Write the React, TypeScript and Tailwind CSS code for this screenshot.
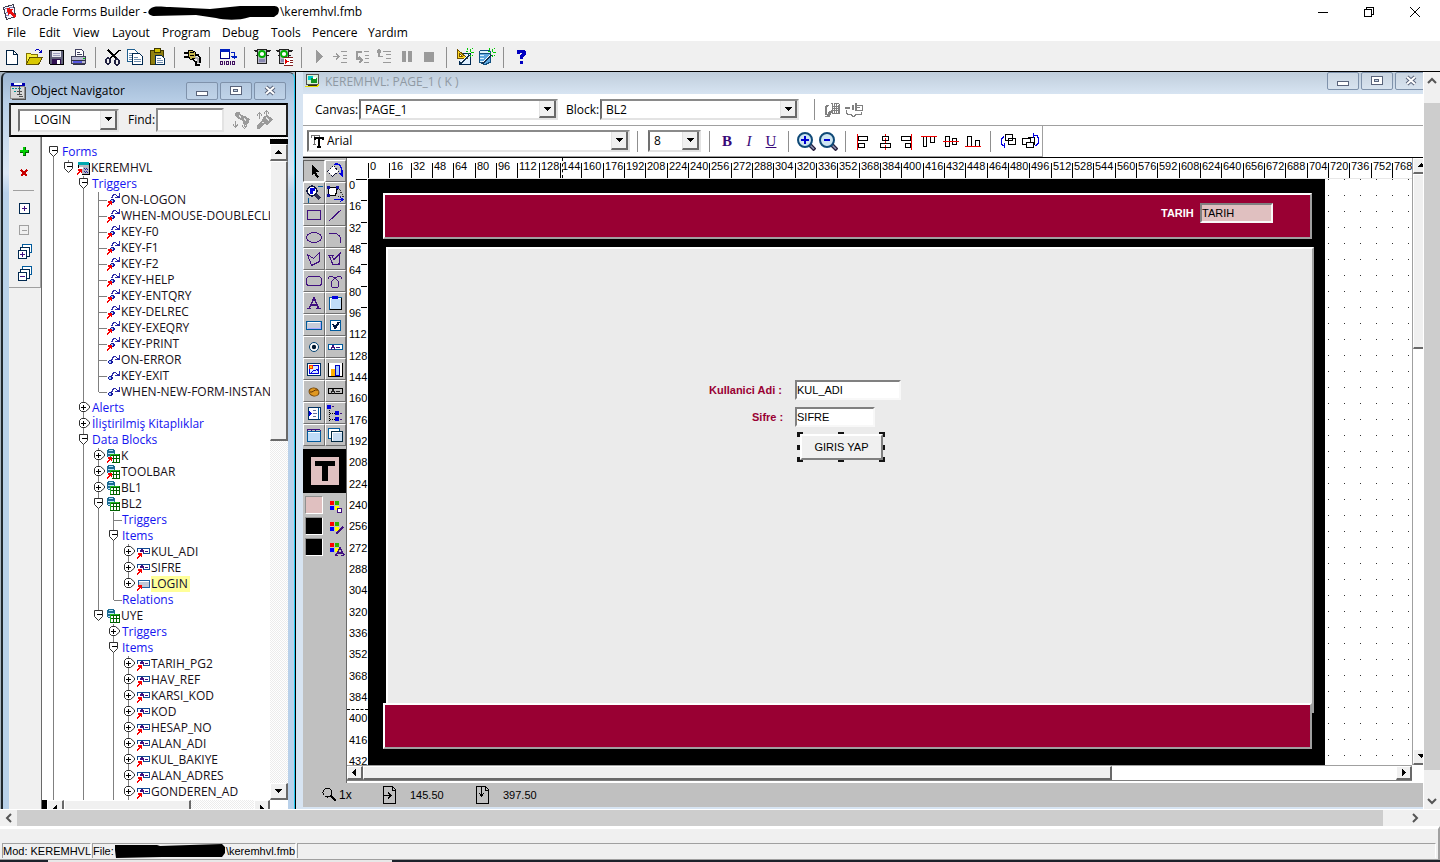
import type { ReactNode } from "react";

/* ---------- drawing helpers ---------- */

function Icon({ children, w = 20, h = 20 }: { children: ReactNode; w?: number; h?: number }) {
  return (
    <svg width={w} height={h} viewBox={`0 0 ${w} ${h}`} className="block shrink-0" fill="none" shapeRendering="crispEdges" aria-hidden="true">
      {children}
    </svg>
  );
}

function ToolButton({ label, children }: { label: string; children: ReactNode }) {
  return (
    <button type="button" aria-label={label} className="flex h-[22px] w-[22px] shrink-0 items-center justify-center">
      {children}
    </button>
  );
}

function Separator() {
  return (
    <div className="flex h-[21px] w-[13px] shrink-0 justify-center">
      <div className="w-px bg-[#8f8f8f]" />
    </div>
  );
}

type ComboProps = { label: string; value: string; box: string; field?: string; lead?: ReactNode };

function Combo({ label, value, box, field = "pl-1", lead }: ComboProps) {
  return (
    <div className={`relative flex shrink-0 items-center border-2 border-t-[#8a8a8a] border-r-[#e3e3e3] border-b-[#e3e3e3] border-l-[#707070] bg-white ${box}`}>
      {lead}
      <select aria-label={label} defaultValue={value} className={`h-full min-w-0 flex-1 appearance-none bg-transparent text-[12px] leading-4 outline-none ${field}`}>
        <option>{value}</option>
      </select>
      <span className="pointer-events-none flex h-full w-[17px] items-center justify-center border-r-2 border-b-2 border-l border-r-[#696969] border-b-[#696969] border-l-[#e3e3e3] bg-[#f0f0f0]">
        <Icon w={7} h={4}>
          <path d="M0 0h7v1h-1v1h-1v1h-1v1h-1v-1h-1v-1h-1v-1h-1z" fill="#000" />
        </Icon>
      </span>
    </div>
  );
}

/* ---------- main toolbar icons ---------- */

const grey = "#9a9a9a";

const traffic = (
  <>
    <path d="M5.500 2.500h9v14h-9z" fill="#b8b8c8" stroke="#222" />
    <path d="M1.500 3.500h4M14.500 3.500h4M2.500 4.500h3M14.500 4.500h3M3.500 8.500h2M14.500 8.500h2" stroke="#222" />
    <circle cx="10" cy="7" r="3" fill="#fff" stroke="#00b000" strokeWidth="1.800" shapeRendering="auto" />
    <path d="M7 12h6v3h-6z" fill="#8888b0" />
  </>
);

const wand = (
  <>
    <path d="M6 17l9-9" stroke="#103050" strokeWidth="2" />
    <path d="M7 15l7-7" stroke="#fff" />
    <path d="M13.500 1v2M16.500 2v3M12 4.500h2M17 5.500h3M16.500 8v2M18.500 1v1M14.500 6v1M18.500 8v1" stroke="#00c800" />
  </>
);

const mainTools: (null | [string, ReactNode])[] = [
  ["New", <Icon><path d="M4.500 3.500h7l4 4v10h-11z" fill="#fff" stroke="#002040" /><path d="M11.500 3.500v4h4" stroke="#002040" /></Icon>],
  ["Open", <Icon><path d="M2.500 17.500v-11h4l1 1h6v3" fill="#f8f040" stroke="#807000" /><path d="M2.500 17.500l3-7h13l-4 7z" fill="#d8c800" stroke="#605000" /><path d="M11 3.500c2-2 5-1 6 2M14.500 5.500h3v-3" stroke="#0000c0" /></Icon>],
  ["Save", <Icon><path d="M3.500 3.500h14v14h-13l-1-1z" fill="#606078" stroke="#000" /><path d="M6 4h9v6h-9z" fill="#e8e8f0" /><path d="M7 6h7M7 8h7" stroke="#a0a0c0" /><path d="M6 12h9v5h-9z" fill="#301050" /><path d="M11 13h3v4h-3z" fill="#fff" /></Icon>],
  ["Print", <Icon><path d="M7.500 9.500v-7h6l2 2v5" fill="#fff" stroke="#404060" /><path d="M9 5h3M9 7h5" stroke="#404060" /><path d="M3.500 9.500h14v7h-14z" fill="#b8b8d0" stroke="#404058" /><path d="M3 13h15M5 17.500h12" stroke="#303048" /><path d="M5 14h9v2h-9z" fill="#5858e0" /><path d="M15 11h2v1h-2z" fill="#00c000" /></Icon>],
  null,
  ["Cut", <Icon><path d="M5 3l9 9M18 3.500h-2l-10 9" stroke="#000" strokeWidth="1.500" /><ellipse cx="5" cy="14" rx="2" ry="3" stroke="#202040" strokeWidth="1.500" /><ellipse cx="14" cy="15" rx="2" ry="3" stroke="#202040" strokeWidth="1.500" /></Icon>],
  ["Copy", <Icon><path d="M2.500 2.500h7l3 3v9h-10z" fill="#fff" stroke="#206090" /><path d="M4 6h5M4 8h5M4 10h5M4 12h5" stroke="#7090b0" /><path d="M7.500 6.500h7l3 3v8h-10z" fill="#fff" stroke="#002850" /><path d="M9 10h4M9 12h7M9 14h7" stroke="#7090b0" /></Icon>],
  ["Paste", <Icon><path d="M3.500 3.500h13v14h-13z" fill="#908010" stroke="#403800" /><path d="M7 1.500h6v4h-6z" fill="#d0c000" stroke="#403800" /><path d="M8.500 8.500h6l3 3v6h-9z" fill="#fff" stroke="#002850" /><path d="M10 11h4M10 13h6M10 15h6" stroke="#7090b0" /></Icon>],
  null,
  ["Connect", <Icon><path d="M2 6h5M2 10h5" stroke="#000" strokeWidth="2" /><path d="M6.500 3.500h4l3 2v6l-4 1h-1l-2-3z" fill="#c8b850" stroke="#000" /><path d="M8 5.500h4M8 8.500h4" stroke="#000" /><path d="M13 8h3l2 3v5M10 12l4 3v3h4" stroke="#000" strokeWidth="1.500" /><path d="M13 10l3 2v4" stroke="#b0b0b0" strokeWidth="2" /></Icon>],
  null,
  ["Compile module", <Icon><path d="M3.500 2.500h9v9h-9z" fill="#fff" stroke="#000080" /><path d="M3 3.500h10" stroke="#0020c0" strokeWidth="3" /><path d="M14 5.500h3.500v5M15 9.500h5l-2.500 2z" stroke="#0020c0" /><path d="M3.500 14.500h2v3h-2zM9.500 14.500h2v3h-2zM7.500 14v4M13.500 14v4M15.500 14.500h2v3h-2z" stroke="#401060" /></Icon>],
  null,
  ["Run form", <Icon>{traffic}</Icon>],
  ["Run form debug", <Icon>{traffic}<path d="M10 10h9v9h-9z" fill="#fff" /><path d="M11 12l4 2.500-4 2.500z" fill="#e00000" /><path d="M10 10.500h9M16 13.500h3M16 15.500h3M10 18.500h9" stroke="#802020" /></Icon>],
  null,
  ["Go", <Icon><path d="M7 3v13l7-6.500z" fill={grey} /></Icon>],
  ["Step into", <Icon><path d="M2 9.500h6M5 6.500l3 3-3 3M10 4.500h6M12 8.500h4M12 11.500h4M10 15.500h6" stroke={grey} strokeWidth="1.500" /></Icon>],
  ["Step over", <Icon><path d="M9 5h-5v7h4M6 10l3 3-3 3M11 4.500h5M12 8.500h4M12 11.500h4M11 15.500h5" stroke={grey} strokeWidth="1.500" /></Icon>],
  ["Step out", <Icon><path d="M8 9.500h-4v-6M2 5.500l2-3 2 3M8 4.500h8M11 7.500h5M11 11.500h5M8 15.500h8" stroke={grey} strokeWidth="1.500" /></Icon>],
  ["Pause", <Icon><path d="M5 4h4v11h-4zM11 4h4v11h-4z" fill={grey} /></Icon>],
  ["Stop", <Icon><path d="M5 5h10v10h-10z" fill={grey} /></Icon>],
  null,
  ["Layout wizard", <Icon><path d="M8.500 6.500h8v11h-11v-4" fill="#e0f0ff" stroke="#002850" /><path d="M3.500 2.500v9h10z" fill="#ffd820" stroke="#705000" /><path d="M5.500 6.500v3h3z" fill="#fff" stroke="#705000" />{wand}</Icon>],
  ["Data block wizard", <Icon><path d="M3.500 5v10l4 2h3l4-2v-10z" fill="#60a8e0" stroke="#105080" /><ellipse cx="9" cy="5" rx="5.500" ry="2" fill="#e0f4ff" stroke="#105080" /><path d="M4 8.500h4M4 11.500h4M4 14.500h3" stroke="#e0f4ff" />{wand}</Icon>],
  null,
  ["Help", <Icon><path d="M7 7v-2l1-1h4l1 1v2l-3 3v2M10 14v3" stroke="#0000c0" strokeWidth="3" /></Icon>],
];

/* ---------- layout toolbar icons ---------- */

const K = "#000";
const R = "#f00000";

const magnifier = (
  <>
    <path d="M14 14l5 5" stroke="#28203c" strokeWidth="4" shapeRendering="auto" />
    <path d="M14 14l4 4" stroke="#9098b8" strokeWidth="1.500" shapeRendering="auto" />
    <circle cx="9" cy="9" r="7" fill="#cfe6f2" stroke="#104a78" strokeWidth="2" shapeRendering="auto" />
  </>
);

const alignTools: [string, ReactNode][] = [
  ["Align left", <Icon><path d="M5.500 5.500h9v4h-9zM5.500 12.500h6v4h-6z" stroke={K} /><path d="M4.500 3v16" stroke={R} /></Icon>],
  ["Align center", <Icon><path d="M7.500 5.500h6v4h-6zM5.500 12.500h10v4h-10z" stroke={K} /><path d="M10.500 3v2M10.500 7v2M10.500 10v2M10.500 14v2M10.500 17v2" stroke={R} /></Icon>],
  ["Align right", <Icon><path d="M4.500 5.500h9v4h-9zM8.500 12.500h5v4h-5z" stroke={K} /><path d="M14.500 3v16" stroke={R} /></Icon>],
  ["Align top", <Icon><path d="M4.500 5.500h3v10h-3zM11.500 5.500h4v6h-4z" stroke={K} /><path d="M2 5.500h16" stroke={R} /></Icon>],
  ["Align middle", <Icon><path d="M4.500 5.500h4v10h-4zM11.500 7.500h4v6h-4z" stroke={K} /><path d="M2 10.500h16" stroke={R} /></Icon>],
  ["Align bottom", <Icon><path d="M4.500 5.500h4v10h-4zM12.500 9.500h4v6h-4z" stroke={K} /><path d="M2 15.500h16" stroke={R} /></Icon>],
];

/* ---------- palette icons ---------- */

const P = "#401080";
const B = "#005a9c";

const palette: [string, ReactNode][] = [
  ["Select", <Icon><path d="M8 4v10l2-2 3 5 2-1-3-5h3z" fill="#000" /></Icon>],
  ["Rotate", <Icon><path d="M2.500 10.500l6-6 5 6-6 5z" fill="#fff" stroke="#101030" strokeDasharray="2 1" /><path d="M9 3.500c5-2 8 2 8 9" stroke="#0000e0" strokeWidth="1.500" /><path d="M13 12h5v5z" fill="#0000e0" /></Icon>],
  ["Magnify", <Icon><circle cx="8" cy="8" r="5" fill="#fff" stroke="#101840" strokeWidth="1.500" /><path d="M6 5h5v3h-2v3h-3z" fill="#0000e0" /><path d="M12 12l4 4" stroke="#303050" strokeWidth="3" /><path d="M14 3.500h5M4.500 15v5" stroke={B} /></Icon>],
  ["Reshape", <Icon><path d="M3.500 4.500h9l-2 8h-7z" fill="#fff" stroke="#000" /><path d="M13 4l5 9h-6" stroke="#333" strokeDasharray="1 1" /><path d="M2 3h3v3h-3zM11 3h3v3h-3zM2 11h3v3h-3z" fill="#1010a0" /><path d="M9 16.500h9M15 14l3 2.500-3 2.500" stroke="#0000e0" /></Icon>],
  ["Rectangle", <Icon><path d="M3.500 5.500h13v9h-13z" stroke={P} /></Icon>],
  ["Line", <Icon><path d="M4 16l12-11" stroke={P} strokeWidth="1.200" /></Icon>],
  ["Ellipse", <Icon><ellipse cx="10" cy="10.500" rx="7.500" ry="5" stroke={P} /></Icon>],
  ["Arc", <Icon><path d="M4 6.500h5c5 0 7 3 7 9" stroke={P} /></Icon>],
  ["Polygon", <Icon><path d="M3.500 5.500l6 4 6-6v9l-8 4z" stroke={P} /></Icon>],
  ["Polyline", <Icon><path d="M9 6.500h-5l4 9h6l1-11-6 6-2-3" stroke={P} strokeWidth="1.200" /></Icon>],
  ["Rounded rectangle", <Icon><rect x="2.500" y="5.500" width="15" height="9" rx="3" stroke={P} /></Icon>],
  ["Freehand", <Icon><path d="M3 8c0-3 3-3 5-2s6 4 6 7-2 4-4 4-4-1-4-4 4-6 6-7 5-1 5 2" stroke={P} /></Icon>],
  ["Text", <Icon><path d="M5 16l5-11 5 11M7 12h6M3 15.500h4M12 15.500h5" stroke={P} strokeWidth="1.500" /></Icon>],
  ["Frame", <Icon><path d="M4.500 4.500h12v12h-12z" fill="#c0dcf8" stroke={B} /><path d="M5.500 15v-9.500h11" stroke="#fff" /><path d="M16.500 5v11.500h-12" stroke="#000" /><path d="M7 3h6v3h-6z" fill="#0000e0" /></Icon>],
  ["Button", <Icon><rect x="2.500" y="6.500" width="15" height="8" rx="1" fill="#c8ccd8" stroke={B} /><path d="M4 7.500h12" stroke="#fff" /><path d="M4 13.500h12.500v-6" stroke="#a8a8ff" /></Icon>],
  ["Check box", <Icon><path d="M5.500 5.500h10v10h-10z" fill="#fff" stroke={B} strokeWidth="1" /><path d="M8 9l2 4 4-6" stroke="#001840" strokeWidth="2" /></Icon>],
  ["Radio button", <Icon><circle cx="10" cy="10" r="4.500" fill="#fff" stroke="#004070" shapeRendering="auto" /><circle cx="10" cy="10" r="2.200" fill="#001830" shapeRendering="auto" /></Icon>],
  ["Text item", <Icon><path d="M3.500 7.500h14v5h-14z" fill="#fff" stroke={B} /><path d="M6 13l2-5 2 5M11 10.500h4" stroke={P} /></Icon>],
  ["Image item", <Icon><path d="M3.500 4.500h13v12h-13z" fill="#fff" stroke="#003060" /><path d="M5.500 6.500h9v8h-9z" fill="#d8e8ff" stroke="#0000e0" /><path d="M7 14l3-3 1 1 2-2 2 3" stroke="#0000e0" /><circle cx="7" cy="8" r="2" fill="#ffd000" stroke="#ff3000" /></Icon>],
  ["Chart item", <Icon><path d="M3.500 4v13h14v-13" fill="#fff" stroke="#000" /><path d="M6 10h4v7h-4z" fill="#ffb000" /><path d="M10.500 6.500h4v10h-4z" fill="#a0c8ff" stroke="#0000c0" /></Icon>],
  ["Bean area", <Icon><ellipse cx="10" cy="11" rx="5" ry="4" fill="#e09820" stroke="#704000" shapeRendering="auto" transform="rotate(15 10 11)" /><path d="M6 11c3 1 4-3 8-2" stroke="#603000" shapeRendering="auto" /></Icon>],
  ["Display item", <Icon><path d="M3.500 7.500h14v5h-14z" stroke="#000" /><path d="M6 13l2-5 2 5M11 10.500h4" stroke="#222" /></Icon>],
  ["List item", <Icon><path d="M4.500 4.500h12v12h-12z" fill="#fff" stroke="#003060" /><path d="M14.500 5v11" stroke={B} /><path d="M9 7.500h3M9 10.500h4M9 13.500h3" stroke="#6070a0" /><path d="M5 8l3 2.500-3 2.500z" fill="#0000e0" /></Icon>],
  ["Tree item", <Icon><path d="M2 2h4v4h-4zM10 8h4v4h-4zM10 14h4v4h-4z" fill="#0000e0" /><path d="M4.500 7v11M5 10.500h5M5 16.500h5" stroke="#000" strokeDasharray="1 1" /><path d="M7 3.500h2M15 10.500h2M15 16.500h2" stroke={P} /></Icon>],
  ["Tab canvas", <Icon><path d="M3.500 6.500h13v10h-13z" fill="#c0dcf8" stroke={B} /><path d="M3.500 6v-2h3l1 2v-2h3l1 2v-2h4l1 2" stroke={P} /><path d="M4 7.500h12" stroke="#fff" /></Icon>],
  ["Stacked canvas", <Icon><path d="M3.500 3.500h11v10h-11z" fill="#fff" stroke={B} /><path d="M6.500 6.500h11v10h-11z" fill="#c8dcf0" stroke="#002840" /><path d="M7.500 16v-8.500h9.500" stroke="#fff" /></Icon>],
];

function Squares({ children }: { children: ReactNode }) {
  return (
    <Icon w={18} h={16}>
      <path d="M2 1h4v4h-4z" fill="#ff0000" />
      <path d="M7 1h4v4h-4z" fill="#30b000" />
      <path d="M2 6h4v4h-4z" fill="#0000ff" />
      <path d="M7 6h4v4h-4z" fill="#ffff00" />
      {children}
    </Icon>
  );
}

/* ---------- object tree ---------- */

type Node = "open" | "closed" | "tee" | "elbow";
type Glyph = "form" | "trigger" | "smart" | "block" | "blockUser" | "item" | "button";
type Row = { text: string; col: number; node: Node; guides?: number[]; glyph?: Glyph; up?: boolean; down?: boolean; selected?: boolean };

const smart = (text: string): Row => ({ text, col: 3, node: "tee", guides: [0, 2], glyph: "smart", up: true, down: true });
const item = (text: string, guides: number[], last = false): Row => ({ text, col: 5, node: "closed", guides, glyph: "item", up: true, down: !last });

const rows: Row[] = [
  { text: "Forms", col: 0, node: "open", down: true },
  { text: "KEREMHVL", col: 1, node: "open", guides: [0], glyph: "form", up: true },
  { text: "Triggers", col: 2, node: "open", guides: [0], up: true, down: true },
  ...["ON-LOGON", "WHEN-MOUSE-DOUBLECLICK", "KEY-F0", "KEY-F1", "KEY-F2", "KEY-HELP", "KEY-ENTQRY", "KEY-DELREC", "KEY-EXEQRY", "KEY-PRINT"].map(smart),
  { text: "ON-ERROR", col: 3, node: "tee", guides: [0, 2], glyph: "trigger" },
  { text: "KEY-EXIT", col: 3, node: "tee", guides: [0, 2], glyph: "trigger" },
  { text: "WHEN-NEW-FORM-INSTANCE", col: 3, node: "elbow", guides: [0, 2], glyph: "trigger" },
  { text: "Alerts", col: 2, node: "closed", guides: [0], up: true, down: true },
  { text: "İliştirilmiş Kitaplıklar", col: 2, node: "closed", guides: [0], up: true, down: true },
  { text: "Data Blocks", col: 2, node: "open", guides: [0], up: true, down: true },
  { text: "K", col: 3, node: "closed", guides: [0, 2], glyph: "blockUser", up: true, down: true },
  { text: "TOOLBAR", col: 3, node: "closed", guides: [0, 2], glyph: "blockUser", up: true, down: true },
  { text: "BL1", col: 3, node: "closed", guides: [0, 2], glyph: "block", up: true, down: true },
  { text: "BL2", col: 3, node: "open", guides: [0, 2], glyph: "block", up: true, down: true },
  { text: "Triggers", col: 4, node: "tee", guides: [0, 2, 3] },
  { text: "Items", col: 4, node: "open", guides: [0, 2, 3], up: true, down: true },
  item("KUL_ADI", [0, 2, 3, 4]),
  item("SIFRE", [0, 2, 3, 4]),
  { text: "LOGIN", col: 5, node: "closed", guides: [0, 2, 3, 4], glyph: "button", up: true, selected: true },
  { text: "Relations", col: 4, node: "elbow", guides: [0, 2, 3] },
  { text: "UYE", col: 3, node: "open", guides: [0, 2], glyph: "block", up: true },
  { text: "Triggers", col: 4, node: "closed", guides: [0, 2], up: true, down: true },
  { text: "Items", col: 4, node: "open", guides: [0, 2], up: true, down: true },
  ...["TARIH_PG2", "HAV_REF", "KARSI_KOD", "KOD", "HESAP_NO", "ALAN_ADI", "KUL_BAKIYE", "ALAN_ADRES", "GONDEREN_AD"].map((t) => item(t, [0, 2, 4])),
];

const redArrow = <path d="M1 9h4v4h-1v-1h-1v1h-1v1h-1v1h-1v-2h1v-1h1v-1h-1z" fill="#f80000" />;

function RowGlyph({ kind }: { kind: Glyph }) {
  const ball = kind === "smart" ? "M4 7h3v1h1v2h-1v1h-3v-1h-1v-2h1z" : "M2 8h3v1h1v2h-1v1h-3v-1h-1v-2h1z";
  const shine = kind === "smart" ? "M4 8h2v2h-2z" : "M2 9h2v2h-2z";
  return (
    <Icon w={14} h={16}>
      {kind === "form" && (
        <>
          <path d="M1.500 3.500h11v11h-11z" fill="#b8b8c0" stroke="#000" />
          <path d="M1 3.500h11" stroke="#00a8b0" strokeWidth="3" />
          <path d="M2 7h4v2h-4z" fill="#fff" />
          <path d="M7 8.500h1M9 8.500h1M8 9.500h1M10 9.500h1M7 11.500h1M9 11.500h1M8 12.500h1M10 12.500h1" stroke="#2020a0" />
          <path d="M0 8h5v7h-5z" fill="#fff" />
          {redArrow}
        </>
      )}
      {(kind === "smart" || kind === "trigger") && (
        <>
          <g transform={kind === "trigger" ? "translate(0 2)" : undefined}>
            <path d="M4 5.500h1v-2h1v-1h3v1h1v1h1M12.500 1v5M8 5.500h5M11.500 4v2" stroke="#1818a0" strokeWidth="0.900" />
          </g>
          <path d={ball} fill="#1818a0" />
          <path d={shine} fill="#a0d0ff" />
          {kind === "smart" && redArrow}
        </>
      )}
      {(kind === "block" || kind === "blockUser") && (
        <>
          <path d="M1 1h6v1h1v8h-7v-1h-1v-7h1z" fill="#1c6c94" />
          <path d="M2 2.500h4M1 5.500h6M1 8.500h3" stroke="#b8e4fa" />
          <path d="M3 6h10v9h-10z" fill="#006000" />
          <path d="M4 8h2v2h-2zM7 8h2v2h-2zM10 8h2v2h-2zM4 11h2v3h-2zM7 11h2v3h-2zM10 11h2v3h-2z" fill="#fff" />
          <path d="M3 6.500h9M3.500 6v8" stroke="#20b820" />
          {kind === "blockUser" && (
            <>
              <path d="M0 9h5v6h-5z" fill="#fff" />
              {redArrow}
            </>
          )}
        </>
      )}
      {kind === "item" && (
        <>
          <path d="M0.500 8v-3.500h12v5h-7" fill="#fff" stroke="#104890" />
          <path d="M3 8v-2h1v-1h1v1h1v3M3 7.500h3M8 7.500h3" stroke={P} />
          {redArrow}
        </>
      )}
      {kind === "button" && (
        <>
          <path d="M1.500 4.500h11v7h-11z" fill="#c0c8d8" stroke="#2060a0" />
          <path d="M2 5.500h10" stroke="#fff" />
          <path d="M0 9h5v6h-5z" fill="#fff" />
          {redArrow}
        </>
      )}
    </Icon>
  );
}

function TreeRow({ row }: { row: Row }) {
  const x = row.col * 15 + 7.5;
  const leaf = row.node === "tee" || row.node === "elbow";
  const line = "#808080";
  return (
    <li className="flex h-4 items-center whitespace-nowrap">
      <Icon w={row.col * 15 + 16} h={16}>
        {row.guides?.map((g) => <path key={g} d={`M${g * 15 + 7.5} 0v16`} stroke={line} />)}
        {(row.up || leaf) && <path d={`M${x} 0v8`} stroke={line} />}
        {(row.down || row.node === "tee") && <path d={`M${x} 8v8`} stroke={line} />}
        {leaf && <path d={`M${x} 8.500h8`} stroke={line} />}
        {row.node === "open" && (
          <>
            <path d={`M${x - 4} 2.500h8v6l-4 4l-4 -4z`} fill="#fff" stroke="#303030" shapeRendering="auto" />
            <path d={`M${x - 2} 6.500h5`} stroke="#000" />
          </>
        )}
        {row.node === "closed" && (
          <>
            <path d={`M${x - 2} 2.500h4l4 3.500v2l-4 3.500h-4l-2 -2v-5z`} fill="#fff" stroke="#303030" shapeRendering="auto" />
            <path d={`M${x - 2.5} 7.500h5M${x} 5v5`} stroke="#000" />
          </>
        )}
      </Icon>
      {row.glyph && <RowGlyph kind={row.glyph} />}
      <span className={row.selected ? "bg-[#ffff99] pr-[2px] text-[#101030]" : row.glyph ? "text-[#181018]" : "text-[#1414f0]"}>{row.text}</span>
    </li>
  );
}

/* ---------- window chrome ---------- */

function CaptionButtons() {
  const btn = "flex h-[18px] w-8 shrink-0 items-center justify-center rounded-[2px] border border-[#7f92ab] bg-white/15";
  return (
    <div className="flex gap-[2px]">
      <button type="button" aria-label="Minimize" className={btn}>
        <Icon w={12} h={12}><rect x="0.500" y="6.500" width="11" height="4" rx="1" fill="#fff" stroke="#59637a" /></Icon>
      </button>
      <button type="button" aria-label="Maximize" className={btn}>
        <Icon w={12} h={12}><rect x="0.500" y="1.500" width="11" height="8" rx="1" fill="#fff" stroke="#59637a" /><rect x="3.500" y="4.500" width="4" height="2" fill="#c8d6e6" stroke="#59637a" /></Icon>
      </button>
      <button type="button" aria-label="Close" className={btn}>
        <Icon w={12} h={12}><path d="M2 2l8 7M10 2l-8 7" stroke="#59637a" strokeWidth="4" shapeRendering="auto" /><path d="M2 2l8 7M10 2l-8 7" stroke="#fff" strokeWidth="2" shapeRendering="auto" /></Icon>
      </button>
    </div>
  );
}

const raised = "border-t border-l border-r-2 border-b-2 border-t-white border-l-white border-r-[#696969] border-b-[#696969] bg-[#f0f0f0]";

function Arrow({ dir, box }: { dir: "up" | "down" | "left" | "right"; box: string }) {
  const d = {
    up: "M4 2h1v1h1v1h1v1h1v1h-7v-1h1v-1h1v-1h1z",
    down: "M1 2h7v1h-1v1h-1v1h-1v1h-1v-1h-1v-1h-1v-1h-1z",
    left: "M6 1v7h-1v-1h-1v-1h-1v-1h-1v-1h1v-1h1v-1h1v-1z",
    right: "M3 1h1v1h1v1h1v1h1v1h-1v1h-1v1h-1v1h-1z",
  }[dir];
  return (
    <button type="button" aria-label={`Scroll ${dir}`} className={`flex shrink-0 items-center justify-center ${raised} ${box}`}>
      <Icon w={9} h={9}><path d={d} fill="#000" /></Icon>
    </button>
  );
}

function Chevron({ d, label, box }: { d: string; label: string; box: string }) {
  return (
    <button type="button" aria-label={label} className={`flex shrink-0 items-center justify-center ${box}`}>
      <svg width="10" height="10" viewBox="0 0 10 10" fill="none" aria-hidden="true"><path d={d} stroke="#555" strokeWidth="2" /></svg>
    </button>
  );
}

const hatch = "bg-[repeating-conic-gradient(#ececec_0_25%,#ffffff_0_50%)] bg-[length:2px_2px]";

/* ---------- object navigator ---------- */

function Navigator() {
  const navBtn = "flex h-[22px] w-full items-center justify-center";
  return (
    <section className="flex w-[296px] shrink-0 border-r border-black bg-[#a8b4c0] pl-px">
      <div className="flex min-w-0 flex-1 flex-col rounded-t-[6px] border-t border-r border-l-2 border-t-[#303840] border-r-[#20c8f0] border-l-[#20282f] bg-[linear-gradient(#9db6d3_0px,#b9cfe7_30px,#dce8f5_100px,#b9d1ea_120px)] px-[6px]">
        <header className="flex h-[30px] shrink-0 items-center gap-1 pt-[6px] pr-[2px]">
          <Icon w={18} h={18}>
            <path d="M2 1h14v3h-14z" fill="#0000b0" /><path d="M5 1h8v2h-8z" fill="#fff" />
            <path d="M1.500 4.500h14v12h-14z" fill="#d8d8d8" stroke="#909090" />
            <path d="M3 6.500h2M6 6.500h2M9 6.500h3M5 9.500h2" stroke="#009090" /><path d="M8 9.500h5M8 12.500h5M10 14.500h4M16.500 5v12h-14M10.500 4v9" stroke="#505050" />
          </Icon>
          <h2 className="flex-1 text-[12px] whitespace-nowrap">Object Navigator</h2>
          <CaptionButtons />
        </header>
        <div className="flex h-[34px] shrink-0 items-center border-2 border-t-black border-r-[#202020] border-b-black border-l-[#303030] bg-[#f0f0f0] pl-[7px]">
          <Combo label="Object" value="LOGIN" box="h-[23px] w-[101px]" field="pl-[14px]" />
          <label htmlFor="find" className="ml-[9px] w-7 whitespace-nowrap">Find:</label>
          <input id="find" className="h-[24px] w-[68px] border-2 border-t-[#8a8a8a] border-r-[#e3e3e3] border-b-[#e3e3e3] border-l-[#8a8a8a] bg-white px-1 outline-none" />
          <div className="ml-[6px] flex gap-px">
            <ToolButton label="Find next"><Icon><path d="M5 2h4l1 3 4 1 5 3-1 3-3 3h-2l-2-5-4-1-3-4zM4 4l5 5" fill={grey} /><path d="M8 5l2 3M13 8l2 3" stroke="#e8e8e8" /><path d="M4.500 11v6M2 14.500l2.500 3 2.500-3M13.500 12v5M11 15.500l2.500 3 2.500-3" stroke={grey} /></Icon></ToolButton>
            <ToolButton label="Find previous"><Icon><path d="M3 16l5-6 2-4 3-1 6 4-2 2-3 4-4-1-5 5h-2z" fill={grey} /><path d="M12 7l3 4M8 12l2 1" stroke="#e8e8e8" /><path d="M5.500 3v6M3 5.500l2.500-3 2.500 3M12.500 1v4M10 3.500l2.500-3 2.500 3" stroke={grey} /></Icon></ToolButton>
          </div>
        </div>
        <div className="flex min-h-0 flex-1 bg-[#f0f0f0]">
          <div className="w-8 shrink-0">
            <div className="flex flex-col items-center border-r border-b border-[#a0a0a0] pt-[3px] pr-[2px] pb-[2px]">
              <button type="button" aria-label="Create" className={navBtn}><Icon><path d="M9 6h3v3h3v3h-3v3h-3v-3h-3v-3h3z" fill="#006000" /><path d="M9 6h2v3h3v2h-3v3h-2v-3h-3v-2h3z" fill="#00d000" /></Icon></button>
              <button type="button" aria-label="Delete" className={navBtn}><Icon><path d="M7 7l6 6M13 7l-6 6" stroke="#c80000" strokeWidth="2.500" /></Icon></button>
              <div className="my-[6px] h-px w-[21px] bg-[#a0a0a0]" />
              <button type="button" aria-label="Expand" className={navBtn}><Icon><path d="M5.500 5.500h10v10h-10z" fill="#fff" stroke="#002850" /><path d="M8 10.500h5M10.500 8v5" stroke={P} /></Icon></button>
              <button type="button" aria-label="Collapse" className={navBtn}><Icon><path d="M5.500 5.500h9v9h-9z" stroke="#a0a0a0" /><path d="M8 10.500h5" stroke="#a0a0a0" /></Icon></button>
              {["M6 12.500h5M8.500 10v5", "M6 12.500h5"].map((d) => (
                <button key={d} type="button" aria-label="All levels" className={navBtn}>
                  <Icon><path d="M8.500 2.500h9v8h-9z" fill="#fff" stroke={B} /><path d="M6.500 5.500h9v9h-9z" fill="#fff" stroke="#002850" /><path d="M4.500 8.500h8v8h-8z" fill="#fff" stroke="#002850" /><path d={d} stroke={P} /></Icon>
                </button>
              ))}
            </div>
          </div>
          <div className="flex min-w-0 flex-1 flex-col border-l border-[#696969] bg-white">
            <div className="flex min-h-0 flex-1">
              <ul className="min-w-0 flex-1 overflow-hidden pt-[7px] pl-[4px] text-[12px] leading-4">
                {rows.map((row, i) => <TreeRow key={i} row={row} />)}
              </ul>
              <div className={`flex w-[18px] shrink-0 flex-col pt-[2px] ${hatch}`}>
                <div className="h-[5px] shrink-0 bg-black" />
                <Arrow dir="up" box="h-[17px]" />
                <div className={`h-[280px] shrink-0 ${raised}`} />
                <div className="flex-1" />
                <Arrow dir="down" box="h-[17px]" />
              </div>
            </div>
            <div className="flex h-[9px] shrink-0 overflow-hidden">
              <div className="w-[5px] bg-black" />
              <Arrow dir="left" box="h-[17px] w-[17px]" />
              <div className={`h-[17px] w-[127px] ${raised}`} />
              <div className={`flex-1 ${hatch}`} />
              <Arrow dir="right" box="h-[17px] w-[16px]" />
              <div className="w-[18px] bg-white" />
            </div>
          </div>
        </div>
      </div>
    </section>
  );
}

/* ---------- layout editor ---------- */

const tick = (i: number) => Math.round((i * 64) / 3);

function FormCanvas() {
  const field = "absolute h-5 border-2 border-t-[#808080] border-r-[#f8f8f8] border-b-[#f8f8f8] border-l-[#808080] text-[11px] leading-3 text-black outline-none";
  const bevel = "absolute border-2 border-t-white border-r-[#a0a0a0] border-b-[#a0a0a0] border-l-white";
  return (
    <main className="relative min-h-0 min-w-0 flex-1 overflow-hidden bg-white font-['Liberation_Sans',Arial,sans-serif] text-[11px]">
      <svg className="absolute inset-0 h-full w-full" shapeRendering="crispEdges" aria-hidden="true">
        <defs>
          <pattern id="dots" width="16" height="16" patternUnits="userSpaceOnUse"><rect x="0" y="0" width="1" height="1" fill="#333" /></pattern>
        </defs>
        <rect width="100%" height="100%" fill="url(#dots)" />
      </svg>
      <div className="absolute top-0 left-0 h-full w-[957px] bg-black">
        <div className={`${bevel} top-[14px] left-[15px] h-[46px] w-[929px] bg-[#990033]`} />
        <div className={`${bevel} top-[68px] left-[18px] h-[466px] w-[928px] bg-[#ebebeb]`} />
        <div className={`${bevel} top-[524px] left-[15px] h-[46px] w-[929px] bg-[#990033]`} />
        <label htmlFor="tarih" className="absolute top-[26px] left-[793px] font-bold text-white">TARIH</label>
        <input id="tarih" defaultValue="TARIH" className={`${field} top-[24px] left-[832px] w-[73px] bg-[#e0c0c0]`} />
        <label htmlFor="kul" className="absolute top-[203px] left-[341px] font-bold whitespace-nowrap text-[#990033]">Kullanici Adi :</label>
        <input id="kul" defaultValue="KUL_ADI" className={`${field} top-[201px] left-[427px] w-[106px] bg-white`} />
        <label htmlFor="sifre" className="absolute top-[230px] left-[384px] font-bold whitespace-nowrap text-[#990033]">Sifre :</label>
        <input id="sifre" defaultValue="SIFRE" className={`${field} top-[228px] left-[427px] w-[80px] bg-white`} />
        <svg className="absolute top-[253px] left-[429px]" width="88" height="30" shapeRendering="crispEdges" aria-hidden="true">
          <path d="M0 0h6v5h-6zM41 0h6v5h-6zM82 0h6v5h-6zM0 13h6v5h-6zM82 13h6v5h-6zM0 25h6v5h-6zM41 25h6v5h-6zM82 25h6v5h-6z" fill="#141414" />
        </svg>
        <button type="button" className="absolute top-[255px] left-[432px] h-[26px] w-[83px] border-2 border-t-white border-r-[#808080] border-b-[#808080] border-l-white bg-[#f0f0f0] text-[11px]">GIRIS YAP</button>
      </div>
    </main>
  );
}

function Editor() {
  const swatches: [string, string, ReactNode][] = [
    ["Fill color", "bg-[#e0c0c0]", <path d="M9.500 8.500h4v4h-4z" fill="#fff" stroke={P} strokeWidth="1.500" />],
    ["Line color", "bg-black", <path d="M8 13l7-7" stroke={P} strokeWidth="1.500" />],
    ["Text color", "bg-black", <path d="M8 13l4-7 4 7M9 11h5M7 13.500h3M13 13.500h3" stroke={P} strokeWidth="1.500" />],
  ];
  return (
    <section className="flex min-w-0 flex-1 flex-col overflow-hidden bg-[#d7e4f2] pb-[2px] pl-[7px]">
      <header className="flex h-[22px] shrink-0 items-start gap-1 overflow-hidden bg-[linear-gradient(#bfcddb,#d7e4f2)]">
        <Icon w={18} h={18}>
          <path d="M3.500 2.500h12v10h-12z" fill="#d8f0d8" stroke="#505050" strokeWidth="1.500" /><path d="M5 4h5v4h-5z" fill="#00c8c8" /><path d="M8 6h6v5h-6z" fill="#109020" /><path d="M10 5h3v2h-3z" fill="#fff" /><path d="M2 14h11l3-3v2l-2 2h-12z" fill="#e8e000" /><path d="M5 13.500h9" stroke="#303000" />
        </Icon>
        <h2 className="flex-1 pt-[2px] text-[12px] leading-4 whitespace-nowrap text-[#8f99a3]">KEREMHVL: PAGE_1 ( K )</h2>
        <div className="-mr-1 shrink-0"><CaptionButtons /></div>
      </header>
      <div className="flex h-8 shrink-0 items-center border-b border-[#a0a0a0] bg-white pl-3">
        <span className="w-11 shrink-0 whitespace-nowrap">Canvas:</span>
        <Combo label="Canvas" value="PAGE_1" box="h-[21px] w-[199px]" />
        <span className="ml-2 w-[34px] shrink-0 whitespace-nowrap">Block:</span>
        <Combo label="Block" value="BL2" box="h-[21px] w-[199px]" />
        <div className="w-[9px] shrink-0" />
        <Separator />
        <ToolButton label="Associate prompt"><Icon><path d="M7 5.500h-2v1h-1v8h2M8 11v3h-1v2h-1v1M6 12.500h4v-3M3 16.500h3" stroke="#808080" strokeWidth="1.500" /><path d="M9 3.500h2M13 3.500h4M10.500 4v9h7v-9M10 6.500h8M10 8.500h8M10 10.500h8M12.500 3v10M14.500 3v10M16.500 5v8" stroke="#808080" /></Icon></ToolButton>
        <ToolButton label="Update layout"><Icon><path d="M1 7.500h5M8.500 5v5M11.500 3v8" stroke="#808080" strokeWidth="2" /><path d="M13 5.500h5v5h-5M13 7.500h3M2.500 10v3h1v1h4v1h1v1h2v-1h1v-1h6v-2" stroke="#808080" /></Icon></ToolButton>
      </div>
      <div className="flex h-8 shrink-0 border-b border-black bg-white">
        <div className="flex items-center border-r border-b border-[#a0a0a0] pr-px pl-1">
          <Combo
            label="Font"
            value="Arial"
            box="h-[22px] w-[323px]"
            field="pl-[2px]"
            lead={<Icon w={16} h={16}><path d="M2 4.500v-2h8v2M5.500 3v8M4 11.500h3" stroke="#707070" /><path d="M6 7v-2h8v2M10 5v9M8 14h4" stroke="#000" strokeWidth="2" /></Icon>}
          />
          <div className="w-px" /><Separator /><div className="w-[4px]" />
          <Combo label="Font size" value="8" box="h-[22px] w-[53px]" />
          <div className="w-[2px]" /><Separator />
          {[["Bold", "B", "font-bold"], ["Italic", "I", "italic"], ["Underline", "U", "underline"]].map(([name, letter, style]) => (
            <button key={name} type="button" aria-label={name} className={`h-[22px] w-[22px] font-['Liberation_Serif',serif] text-[15px] leading-5 text-[#380878] ${style}`}>{letter}</button>
          ))}
          <Separator />
          <ToolButton label="Zoom in"><Icon>{magnifier}<path d="M5 9h8M9 5v8" stroke="#0000d0" strokeWidth="2" /></Icon></ToolButton>
          <ToolButton label="Zoom out"><Icon>{magnifier}<path d="M6 9h6" stroke="#0000d0" strokeWidth="2" /></Icon></ToolButton>
          <Separator />
          {alignTools.map(([name, icon]) => <ToolButton key={name} label={name}>{icon}</ToolButton>)}
          <Separator />
          <ToolButton label="Bring to front"><Icon><path d="M7.500 3.500h7v6h-7zM10.500 7.500h7v6h-7z" fill="#fff" stroke={K} /><path d="M6 5.500h-1v1h-1v1h-1v6h1v1h2M6.500 12v5M4 14.500h3" stroke="#0000e0" /></Icon></ToolButton>
          <ToolButton label="Send to back"><Icon><path d="M8.500 6.500h6v7h-6z" fill="#fff" stroke={K} /><path d="M2.500 7.500h8v6h-8z" fill="#fff" stroke={K} /><path d="M6.500 11.500h7v5h-7z" fill="#fff" stroke={K} /><path d="M15 14.500h1v-1h1v-1h1v-6h-1v-2h-3M13.500 2v5M13 4.500h3" stroke="#0000e0" /></Icon></ToolButton>
        </div>
      </div>
      <div className="flex min-h-0 flex-1 bg-white">
        <aside className="w-11 shrink-0 border-r border-[#6a6a6a] bg-[#c0c0c0] pt-[2px]">
          <div className="grid grid-cols-2">
            {palette.map(([name, icon], i) => (
              <button key={name} type="button" aria-label={name} className={`flex h-[22px] items-center justify-center overflow-hidden border ${i === 0 ? "border-t-[#606060] border-r-white border-b-white border-l-[#606060]" : "border-t-white border-r-[#707070] border-b-[#707070] border-l-white"}`}>
                {icon}
              </button>
            ))}
          </div>
          <div className="mt-[3px] flex h-11 items-center justify-center bg-black">
            <div className="flex h-7 w-7 items-center justify-center bg-[#e0c0c0]">
              <Icon><path d="M0 0h20v5h-7v15h-6v-15h-7z" fill="#000" /></Icon>
            </div>
          </div>
          <div className="flex flex-col pt-[3px] pl-[2px]">
            {swatches.map(([name, color, mark]) => (
              <div key={name} className="flex h-[21px] items-start gap-[5px]">
                <button type="button" aria-label={name} className={`h-[18px] w-[18px] border border-t-[#909090] border-r-white border-b-white border-l-[#909090] ${color}`} />
                <div className="pt-[4px]"><Squares>{mark}</Squares></div>
              </div>
            ))}
          </div>
        </aside>
        <div className="flex min-w-0 flex-1 flex-col">
          <div className="flex min-h-0 flex-1">
            <div className="flex min-w-0 flex-1 flex-col">
              <div className="relative ml-[21px] h-[21px] shrink-0 overflow-hidden border-b border-[#e8e8e8] font-['Liberation_Sans',Arial,sans-serif] text-[11px] leading-3">
                {Array.from({ length: 49 }, (_, i) => (
                  <div key={i} className="absolute top-[2px] flex h-[18px] gap-px" style={{ left: tick(i) }}>
                    <span className="mt-[3px] w-px bg-black" />
                    <span>{i * 16}</span>
                  </div>
                ))}
                <div className="absolute top-0 left-[194px] h-full border-l border-dashed border-black" />
              </div>
              <div className="flex min-h-0 flex-1">
                <div className="relative w-[21px] shrink-0 overflow-hidden font-['Liberation_Sans',Arial,sans-serif] text-[11px] leading-3">
                  {Array.from({ length: 28 }, (_, i) => (
                    <div key={i} className="absolute left-[2px] w-full" style={{ top: tick(i) }}>
                      {i < 7 && <span className={`absolute top-0 right-[3px] h-px bg-black ${i === 0 ? "w-[11px]" : "w-[6px]"}`} />}
                      <span className="block">{i * 16}</span>
                    </div>
                  ))}
                  <div className="absolute top-[530px] left-0 w-full border-t border-dashed border-black" />
                </div>
                <FormCanvas />
              </div>
            </div>
            <div className="w-[11px] shrink-0 overflow-hidden border-l border-[#a0a0a0]">
              <div className="flex h-full w-[17px] flex-col">
                <Arrow dir="up" box="h-4" />
                <div className={`h-[175px] shrink-0 ${raised}`} />
                <div className="flex-1 bg-white" />
                <Arrow dir="down" box="h-4" />
              </div>
            </div>
          </div>
          <div className="flex h-[18px] shrink-0 border-b-2 border-b-white pr-[11px]">
            <div className="flex flex-1 border-t border-b border-t-[#a0a0a0] border-b-[#808080]">
              <Arrow dir="left" box="w-4" />
              <div className={`w-[749px] ${raised}`} />
              <div className="flex-1 bg-white" />
              <Arrow dir="right" box="w-4" />
            </div>
          </div>
        </div>
      </div>
      <footer className="flex h-6 shrink-0 items-center bg-[#c0c0c0] pl-[18px] font-['Liberation_Sans',Arial,sans-serif] text-[12px]">
        <Icon w={18} h={18}><circle cx="6.500" cy="6.500" r="4.500" stroke="#000" /><path d="M10 10l5 5" stroke="#000" strokeWidth="2" /></Icon>
        <span className="w-[43px]">1x</span>
        <Icon w={15} h={18}><path d="M1.500 0.500h9l3 3v14h-12z" stroke="#000" /><path d="M10.500 1v3h3M2 9.500h7M6 6.500l3 3-3 3" stroke="#000" /></Icon>
        <span className="ml-[13px] w-[65px] text-[11px]">145.50</span>
        <Icon w={15} h={18}><path d="M1.500 0.500h9l3 3v14h-12z" stroke="#000" /><path d="M10.500 1v3h3M6.500 1v9M4 7l2.500 3 2.500-3" stroke="#000" /></Icon>
        <span className="ml-[13px] text-[11px]">397.50</span>
      </footer>
    </section>
  );
}

/* ---------- application shell ---------- */

const menus: [string, string][] = [
  ["File", "w-8"], ["Edit", "w-[34px]"], ["View", "w-[39px]"], ["Layout", "w-[50px]"], ["Program", "w-[60px]"],
  ["Debug", "w-[49px]"], ["Tools", "w-[41px]"], ["Pencere", "w-14"], ["Yardım", "w-12"],
];

export default function App() {
  const cell = "flex h-[15px] items-center border-t border-l border-r border-t-[#a0a0a0] border-l-[#a0a0a0] border-r-white whitespace-nowrap";
  return (
    <div className="flex h-screen flex-col overflow-hidden bg-[#f0f0f0] font-['Open_Sans','Noto_Sans',sans-serif] text-[12px] leading-4 text-black">
      <header className="flex h-6 shrink-0 items-center bg-white pl-[2px]">
        <Icon w={16} h={18}>
          <path d="M1.500 4.500l10-3 2 12-9 3z" fill="#f4f4ff" stroke="#404050" /><path d="M3 6l8-2M4 9h3M4 12h3" stroke="#8080b0" /><path d="M5 5l6 1-1 2 4 5-2 2-4-5-2 2z" fill="#e81010" />
        </Icon>
        <h1 className="ml-1 flex items-center whitespace-nowrap">
          <span>Oracle Forms Builder -</span>
          <svg width="131" height="16" viewBox="0 0 131 16" className="ml-px shrink-0" aria-hidden="true">
            <path d="M2 5c4-4 12-2 20-2l40 2 30-3 33 0c6 0 7 3 5 8l-4 3-24 0c-12 4-26 3-34 1l-20-3-43 1c-5-1-6-4-3-7z" fill="#000" />
          </svg>
          <span className="ml-px">\keremhvl.fmb</span>
        </h1>
        <div className="ml-auto flex h-full items-center pr-[2px]">
          <button type="button" aria-label="Minimize" className="flex w-[46px] justify-center"><Icon w={12} h={12}><path d="M1 6.500h10" stroke="#000" /></Icon></button>
          <button type="button" aria-label="Restore" className="flex w-[46px] justify-center"><Icon w={12} h={12}><path d="M1.500 3.500h7v7h-7zM3.500 3v-2h7v7h-2" stroke="#000" /></Icon></button>
          <button type="button" aria-label="Close" className="flex w-[46px] justify-center"><Icon w={12} h={12}><path d="M1 1l10 10M11 1l-10 10" stroke="#000" shapeRendering="auto" /></Icon></button>
        </div>
      </header>
      <nav className="flex h-[17px] shrink-0 items-center bg-white pl-[7px]">
        {menus.map(([name, width]) => <button key={name} type="button" className={`shrink-0 text-left ${width}`}>{name}</button>)}
      </nav>
      <div className="flex h-[31px] shrink-0 items-center border-b border-black pt-[2px] pl-px">
        {mainTools.map((tool, i) => (tool ? <ToolButton key={i} label={tool[0]}>{tool[1]}</ToolButton> : <Separator key={i} />))}
      </div>
      <div className="flex min-h-0 flex-1">
        <Navigator />
        <Editor />
        <div className="flex w-[17px] shrink-0 flex-col border-l border-white bg-[#f0f0f0]">
          <Chevron d="M1 7l4-4 4 4" label="Scroll up" box="h-[17px] w-full" />
          <div className="mt-[14px] mb-[22px] flex-1 bg-[#cdcdcd]" />
          <Chevron d="M1 3l4 4 4-4" label="Scroll down" box="h-[17px] w-full" />
        </div>
      </div>
      <div className="flex h-[17px] shrink-0 border-t border-white pr-[17px]">
        <Chevron d="M7 1l-4 4 4 4" label="Scroll left" box="w-[17px]" />
        <div className="mr-[23px] flex-1 bg-[#cdcdcd]" />
        <Chevron d="M3 1l4 4-4 4" label="Scroll right" box="w-[17px]" />
      </div>
      <footer className="shrink-0 border-t-[3px] border-r-2 border-t-white border-r-[#a0a0a0] font-['Liberation_Sans',Arial,sans-serif] text-[11px] leading-3">
        <div className="mt-[14px] mb-px flex gap-px pr-[2px] pl-[2px]">
          <div className={`w-[89px] ${cell}`}>Mod: KEREMHVL</div>
          <div className={`w-[204px] ${cell}`}>
            <span className="w-[22px]">File:</span>
            <svg width="112" height="14" viewBox="0 0 112 14" className="shrink-0" aria-hidden="true">
              <path d="M1 1l42 0 3 1 30-1 32-1 3 3v6l-3 4h-60l-46 1-1-8z" fill="#000" />
            </svg>
            <span>\keremhvl.fmb</span>
          </div>
          <div className={`flex-1 ${cell}`} />
        </div>
        <div className="h-px bg-[#a0a0a0]" />
      </footer>
      <div className="flex h-[2px] shrink-0 bg-[#1c222b]"><div className="ml-12 w-[344px] bg-[#e8e8e8]" /></div>
    </div>
  );
}
